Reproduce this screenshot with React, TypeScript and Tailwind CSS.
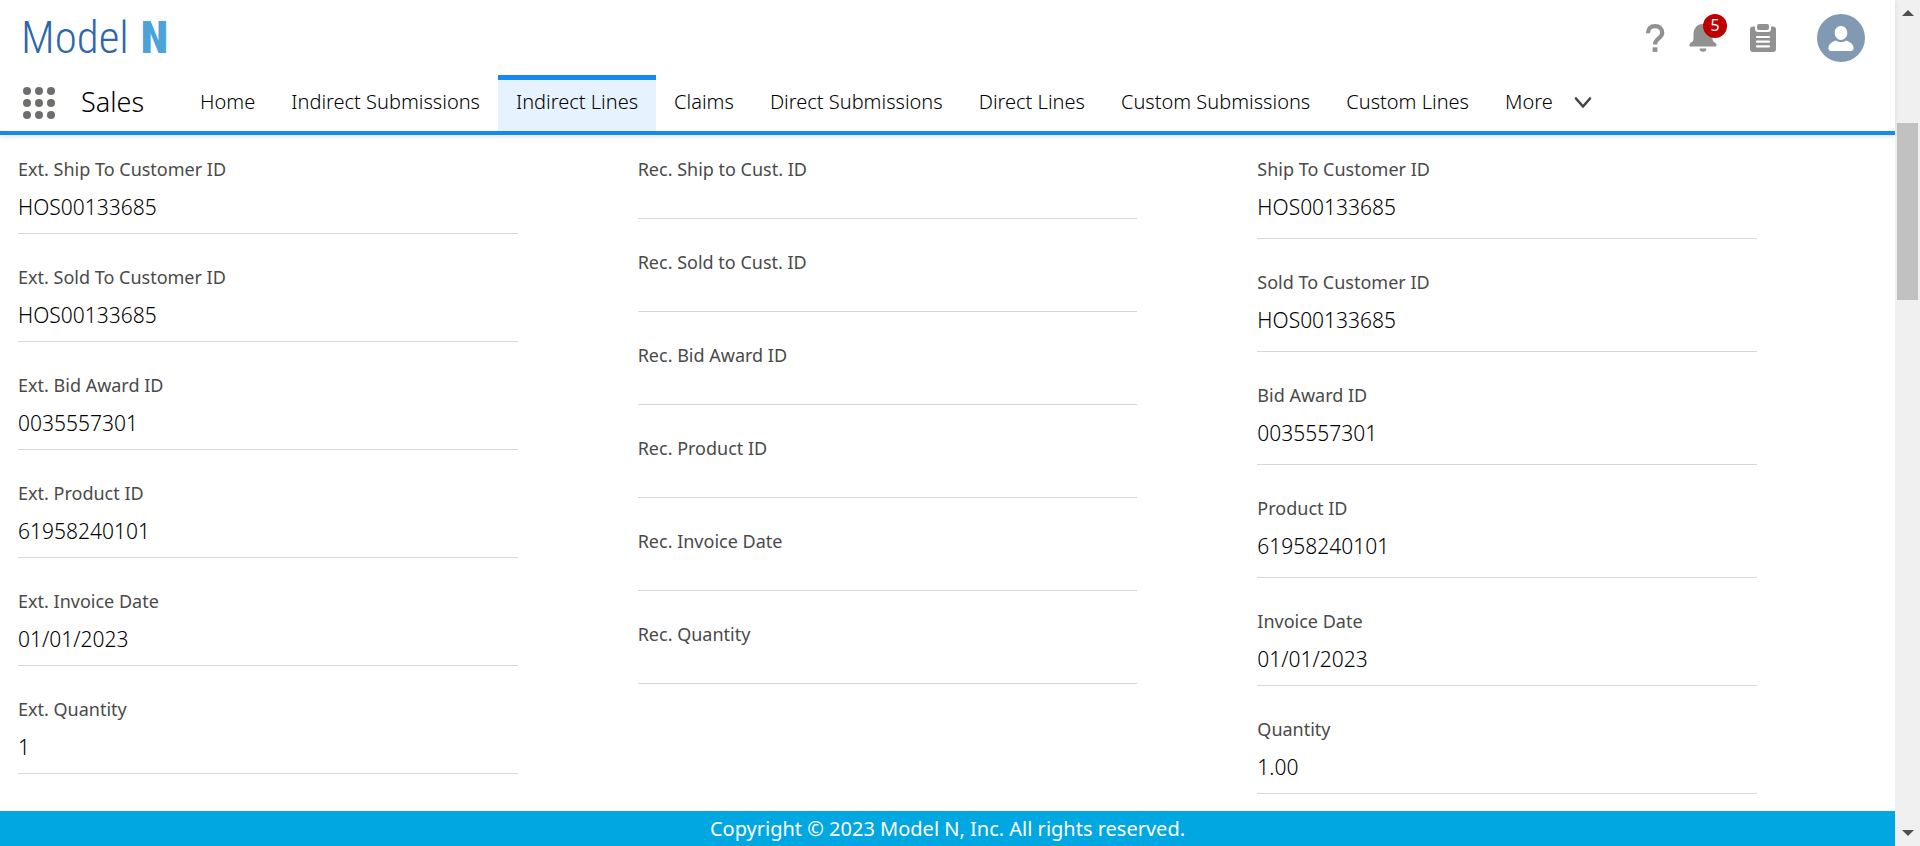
import React from "react";

type Field = { label: string; value?: string };

const external: Field[] = [
  { label: "Ext. Ship To Customer ID", value: "HOS00133685" },
  { label: "Ext. Sold To Customer ID", value: "HOS00133685" },
  { label: "Ext. Bid Award ID", value: "0035557301" },
  { label: "Ext. Product ID", value: "61958240101" },
  { label: "Ext. Invoice Date", value: "01/01/2023" },
  { label: "Ext. Quantity", value: "1" },
];

const recommended: Field[] = [
  { label: "Rec. Ship to Cust. ID" },
  { label: "Rec. Sold to Cust. ID" },
  { label: "Rec. Bid Award ID" },
  { label: "Rec. Product ID" },
  { label: "Rec. Invoice Date" },
  { label: "Rec. Quantity" },
];

const resolvedEditable: Field[] = [
  { label: "Ship To Customer ID", value: "HOS00133685" },
  { label: "Sold To Customer ID", value: "HOS00133685" },
  { label: "Bid Award ID", value: "0035557301" },
  { label: "Product ID", value: "61958240101" },
];

const resolved: Field[] = [
  { label: "Invoice Date", value: "01/01/2023" },
  { label: "Quantity", value: "1.00" },
];

const tabs = [
  "Home",
  "Indirect Submissions",
  "Indirect Lines",
  "Claims",
  "Direct Submissions",
  "Direct Lines",
  "Custom Submissions",
  "Custom Lines",
];

function FieldRow({ field, tall = false }: { field: Field; tall?: boolean }) {
  return (
    <div className="mb-[29px] border-b border-[#d8d8d8]">
      <dt className="text-lg leading-7 font-normal text-[#4a4a4a]">{field.label}</dt>
      {field.value ? (
        <dd className={tall ? "pt-[9px] pb-4 text-[21px] leading-[30px] text-black" : "pt-[9px] pb-[11px] text-[21px] leading-[30px] text-black"}>
          {field.value}
        </dd>
      ) : (
        <dd className="h-[35px]" />
      )}
    </div>
  );
}

export default function App() {
  return (
    <div className="flex h-screen overflow-hidden bg-white font-['Noto_Sans',sans-serif] font-[350] text-[#181818]">
      <div className="flex min-w-0 flex-1 flex-col">
        <header className="z-10 shrink-0 border-b-4 border-[#1589ee] shadow-[0_2px_4px_rgba(0,0,0,0.1)]">
          <div className="flex h-[75px] items-center justify-between pr-[30px] pl-[21px]">
            <a
              href="#home"
              aria-label="Model N"
              className="flex items-baseline gap-3 font-['Roboto_Condensed','Open_Sans',sans-serif] text-[45px] leading-none font-light"
            >
              <span className="text-[#2e67a8]">Model</span>
              <span className="font-black text-[#4ba3d9]">N</span>
            </a>
            <div className="flex items-center text-[#919191]">
              <button aria-label="Help" className="mr-[23px]">
                <svg viewBox="0 0 20 30" className="h-[30px] w-5" fill="none" stroke="currentColor" strokeWidth="4.2">
                  <path d="M2.900 10.300C2.900 5.500 5.800 3.200 10 3.200s7.200 2.300 7.200 6.600c0 5.800-7.200 5.400-7.200 11.600" />
                  <path d="M7.600 26.600h4.800" strokeWidth="4.600" />
                </svg>
              </button>
              <button aria-label="Notifications" className="relative mr-[31px]">
                <svg viewBox="0 0 30 30" className="size-[30px]" fill="currentColor">
                  <path d="M15 1C8.500 1 5.500 6 5.500 11v5c0 2-1.500 3-3 4C1 21 1 23.500 2.500 23.500h25c1.500 0 1.500-2.500 0-3.500s-3-2-3-4v-5C24.500 6 21.500 1 15 1z" />
                  <path d="M11.500 25.500h7c0 2-1.500 3.300-3.500 3.300s-3.500-1.300-3.500-3.300z" />
                </svg>
                <span className="absolute -top-[9px] left-[15px] flex size-6 items-center justify-center rounded-full bg-[#c00000] pb-0.5 text-base font-normal text-white">
                  5
                </span>
              </button>
              <button aria-label="Tasks" className="mr-10">
                <svg viewBox="0 0 28 30" className="h-[30px] w-7" fill="currentColor">
                  <rect x="8" y="1" width="12" height="6" rx="2" />
                  <path d="M4 3.500H6v2.500c0 2 1 3 3 3h10c2 0 3-1 3-3V3.500h2c2 0 3 1 3 3V26c0 2-1 3-3 3H4c-2 0-3-1-3-3V6.500c0-2 1-3 3-3z" />
                  <path d="M8 14h12M8 18.700h12M8 23.400h12" stroke="#fff" strokeWidth="2.200" strokeLinecap="round" />
                </svg>
              </button>
              <button aria-label="Account">
                <svg viewBox="0 0 48 48" className="size-12">
                  <circle cx="24" cy="24" r="24" fill="#8199b2" />
                  <path
                    d="M24 12c3.800 0 6.300 3 6.300 6.800S27.500 26 24 26s-6.300-3.300-6.300-7.200S20.200 12 24 12zM19 26.500c1.500 1 3 1.600 5 1.600s3.500-.6 5-1.600c4 1.300 7.500 3.500 7.500 7.500 0 1.800-.8 3-2.500 3H14c-1.700 0-2.500-1.200-2.500-3 0-4 3.500-6.200 7.500-7.500z"
                    fill="#fff"
                  />
                </svg>
              </button>
            </div>
          </div>
          <nav className="flex h-14 items-stretch pl-[23px] text-xl text-black">
            <button aria-label="App launcher" className="mt-3 self-start">
              <svg viewBox="0 0 32 32" className="size-8" fill="#706e6b">
                {[4, 16, 28].map((y) => [4, 16, 28].map((x) => <circle key={`${x}-${y}`} cx={x} cy={y} r="4" />))}
              </svg>
            </button>
            <span className="mr-[38px] ml-[26px] flex items-center pb-0.5 text-[27px]">Sales</span>
            {tabs.map((t) => (
              <a
                key={t}
                href="#tab"
                aria-current={t === "Indirect Lines" ? "page" : undefined}
                className={
                  t === "Indirect Lines"
                    ? "flex items-center border-t-[5px] border-[#1589ee] bg-[#e6f2fe] px-[18px] pb-[7px]"
                    : "flex items-center px-[18px] pb-0.5"
                }
              >
                {t}
              </a>
            ))}
            <button className="flex items-center gap-5 px-[18px] pb-0.5">
              More
              <svg viewBox="0 0 20 14" className="h-3.5 w-5" fill="none" stroke="#444" strokeWidth="2.600" strokeLinecap="round" strokeLinejoin="round">
                <path d="M3 3.500l7 8 7-8" />
              </svg>
            </button>
          </nav>
        </header>
        <main className="grid min-h-0 flex-1 grid-cols-3 gap-x-[120px] overflow-hidden pt-5 pr-[138px] pl-[18px]">
          <dl>{external.map((f) => <FieldRow key={f.label} field={f} />)}</dl>
          <dl>{recommended.map((f) => <FieldRow key={f.label} field={f} />)}</dl>
          <dl>
            {resolvedEditable.map((f) => <FieldRow key={f.label} field={f} tall />)}
            {resolved.map((f) => <FieldRow key={f.label} field={f} />)}
          </dl>
        </main>
        <footer className="flex h-[35px] shrink-0 items-center justify-center bg-[#00a7e1] text-xl font-normal text-white">
          Copyright © 2023 Model N, Inc. All rights reserved.
        </footer>
      </div>
      <div aria-hidden="true" className="flex w-[25px] shrink-0 flex-col items-center justify-between bg-[#f0f0f0] pt-2.5 pb-2.5">
        <svg viewBox="0 0 12 6" className="h-1.5 w-3">
          <path d="M0 6l6-6 6 6z" fill="#505050" />
        </svg>
        <div className="mt-[107px] mb-auto h-[177px] w-[21px] bg-[#c1c1c1]" />
        <svg viewBox="0 0 12 6" className="h-1.5 w-3">
          <path d="M0 0l6 6 6-6z" fill="#505050" />
        </svg>
      </div>
    </div>
  );
}
